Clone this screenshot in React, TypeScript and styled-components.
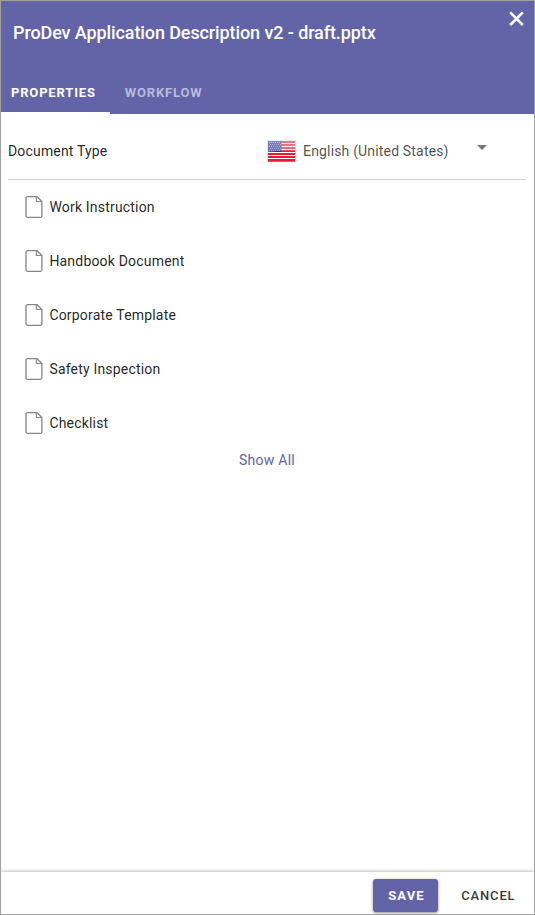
import React from "react";
import styled, { createGlobalStyle } from "styled-components";

const GlobalStyle = createGlobalStyle`
  *, *::before, *::after { box-sizing: border-box; }
  body { margin: 0; background: #fff; font-family: Roboto, "Liberation Sans", sans-serif; }
  button { font-family: inherit; border: 0; background: none; padding: 0; cursor: pointer; }
`;

const Dialog = styled.div`
  display: flex;
  flex-direction: column;
  width: 535px;
  height: 915px;
  border: 1px solid #a0a0a0;
  background: #fff;
  color: rgba(0, 0, 0, 0.87);
  overflow: hidden;
`;

const Header = styled.header`
  display: flex;
  flex-direction: column;
  justify-content: space-between;
  height: 113px;
  flex: none;
  background: #6264a7;
`;

const TitleRow = styled.div`
  display: flex;
  justify-content: space-between;
  align-items: flex-start;
  padding: 10px 10px 0 12px;
`;

const Title = styled.h1`
  margin: 9px 0 0;
  font-size: 18px;
  line-height: 26px;
  font-weight: 500;
  letter-spacing: -0.1px;
  color: #fff;
  white-space: nowrap;
`;

const CloseButton = styled.button`
  display: flex;
`;

const Tabs = styled.nav`
  display: flex;
`;

const Tab = styled.button<{ $active?: boolean }>`
  height: 43px;
  padding: 3px 14px 0 10px;
  border-bottom: 2px solid ${(p) => (p.$active ? "#fff" : "transparent")};
  font-size: 13px;
  line-height: 38px;
  font-weight: 700;
  letter-spacing: 0.83px;
  color: ${(p) => (p.$active ? "#fff" : "#b9badb")};
  & + & { padding-left: 15px; }
`;

const Content = styled.main`
  flex: 1;
  padding: 0 8px 0 7px;
`;

const TypeRow = styled.div`
  display: flex;
  align-items: center;
  height: 66px;
  padding-top: 9px;
  border-bottom: 1px solid #d2d2d2;
  font-size: 14px;
  letter-spacing: 0.17px;
`;

const TypeLabel = styled.div`
  width: 259px;
`;

const LanguageSelect = styled.button`
  display: flex;
  align-items: center;
  width: 219.5px;
  font-size: 14px;
  letter-spacing: 0.17px;
  color: rgba(0, 0, 0, 0.7);
`;

const LanguageName = styled.span`
  flex: 1;
  margin-left: 7px;
  text-align: left;
`;

const CaretSlot = styled.span`
  display: flex;
  padding-bottom: 8px;
`;

const List = styled.ul`
  margin: 0;
  padding: 0 0 0 17px;
  list-style: none;
`;

const Item = styled.li`
  display: flex;
  align-items: center;
  gap: 6.4px;
  height: 54px;
  font-size: 14px;
  letter-spacing: 0.19px;
`;

const ShowAll = styled.button`
  display: block;
  margin: -8px auto 0;
  font-size: 14px;
  line-height: 36px;
  letter-spacing: 0.25px;
  color: #6264a7;
`;

const Footer = styled.footer`
  display: flex;
  justify-content: flex-end;
  align-items: flex-start;
  flex: none;
  height: 42px;
  padding: 7px 7px 0 0;
  box-shadow: 0 -1px 3px rgba(0, 0, 0, 0.25);
`;

const Action = styled.button<{ $primary?: boolean }>`
  height: 33px;
  padding: ${(p) => (p.$primary ? "0 13.5px 0 15.5px" : "0 11.5px 0 23px")};
  border-radius: 3px;
  font-size: 13px;
  font-weight: ${(p) => (p.$primary ? 700 : 500)};
  letter-spacing: ${(p) => (p.$primary ? "1.1px" : "0.85px")};
  color: ${(p) => (p.$primary ? "#fff" : "rgba(0, 0, 0, 0.8)")};
  background: ${(p) => (p.$primary ? "#6264a7" : "transparent")};
  box-shadow: ${(p) => (p.$primary ? "0 1px 3px rgba(0, 0, 0, 0.45)" : "none")};
`;

const CloseIcon = () => (
  <svg width="15" height="15" viewBox="0 0 15 15" fill="none" stroke="#fff" strokeWidth="2.6">
    <path d="M1.2 1.4 13.8 14M13.8 1.4 1.2 14" />
  </svg>
);

const DocumentIcon = () => (
  <svg width="18" height="22" viewBox="0 0 18 22" fill="none" stroke="#858585" strokeWidth="1.3">
    <path d="M2.5.7h9.6l4.8 4.8v14.3a1.5 1.5 0 0 1-1.5 1.5H2.5A1.5 1.5 0 0 1 1 19.8V2.2A1.5 1.5 0 0 1 2.5.7Z" />
    <path d="M11.3.7v4.8h5.5" strokeWidth="1.1" />
  </svg>
);

const stripes = Array.from({ length: 7 }, (_, i) => i);
const starRows = Array.from({ length: 5 }, (_, i) => i);

const FlagIcon = () => (
  <svg width="29" height="22" viewBox="0 0 29 22">
    <defs>
      <linearGradient id="gloss" x1="0" y1="0" x2="0" y2="1">
        <stop offset="0" stopColor="#fff" stopOpacity=".42" />
        <stop offset="1" stopColor="#fff" stopOpacity=".3" />
      </linearGradient>
    </defs>
    <rect x=".5" y=".5" width="28" height="21" fill="#fff" stroke="#ddd" />
    {stripes.map((i) => (
      <rect key={i} x="1" y={1 + i * 3} width="27" height="2" fill="#e81a30" />
    ))}
    <rect x="1" y="1" width="13.5" height="11" fill="#2d3490" />
    {starRows.map((i) => (
      <path
        key={i}
        d={`M${i % 2 ? 3 : 2} ${2.5 + i * 2}H14`}
        stroke="#8f9acb"
        strokeWidth=".8"
        strokeDasharray="1 1"
      />
    ))}
    <path d="M0 0h29v11Q15 10 0 12Z" fill="url(#gloss)" />
    <path d="M1 21.5h27" stroke="#b96b73" strokeWidth="1" />
  </svg>
);

const documentTypes = [
  "Work Instruction",
  "Handbook Document",
  "Corporate Template",
  "Safety Inspection",
  "Checklist",
];

export default function App() {
  return (
    <>
      <GlobalStyle />
      <Dialog>
        <Header>
          <TitleRow>
            <Title>ProDev Application Description v2 - draft.pptx</Title>
            <CloseButton aria-label="Close">
              <CloseIcon />
            </CloseButton>
          </TitleRow>
          <Tabs>
            <Tab $active>PROPERTIES</Tab>
            <Tab>WORKFLOW</Tab>
          </Tabs>
        </Header>
        <Content>
          <TypeRow>
            <TypeLabel>Document Type</TypeLabel>
            <LanguageSelect>
              <FlagIcon />
              <LanguageName>English (United States)</LanguageName>
              <CaretSlot>
                <svg width="10" height="5" viewBox="0 0 10 5">
                  <path d="M0 0h10L5 5Z" fill="#777" />
                </svg>
              </CaretSlot>
            </LanguageSelect>
          </TypeRow>
          <List>
            {documentTypes.map((name) => (
              <Item key={name}>
                <DocumentIcon />
                {name}
              </Item>
            ))}
          </List>
          <ShowAll>Show All</ShowAll>
        </Content>
        <Footer>
          <Action $primary>SAVE</Action>
          <Action>CANCEL</Action>
        </Footer>
      </Dialog>
    </>
  );
}
